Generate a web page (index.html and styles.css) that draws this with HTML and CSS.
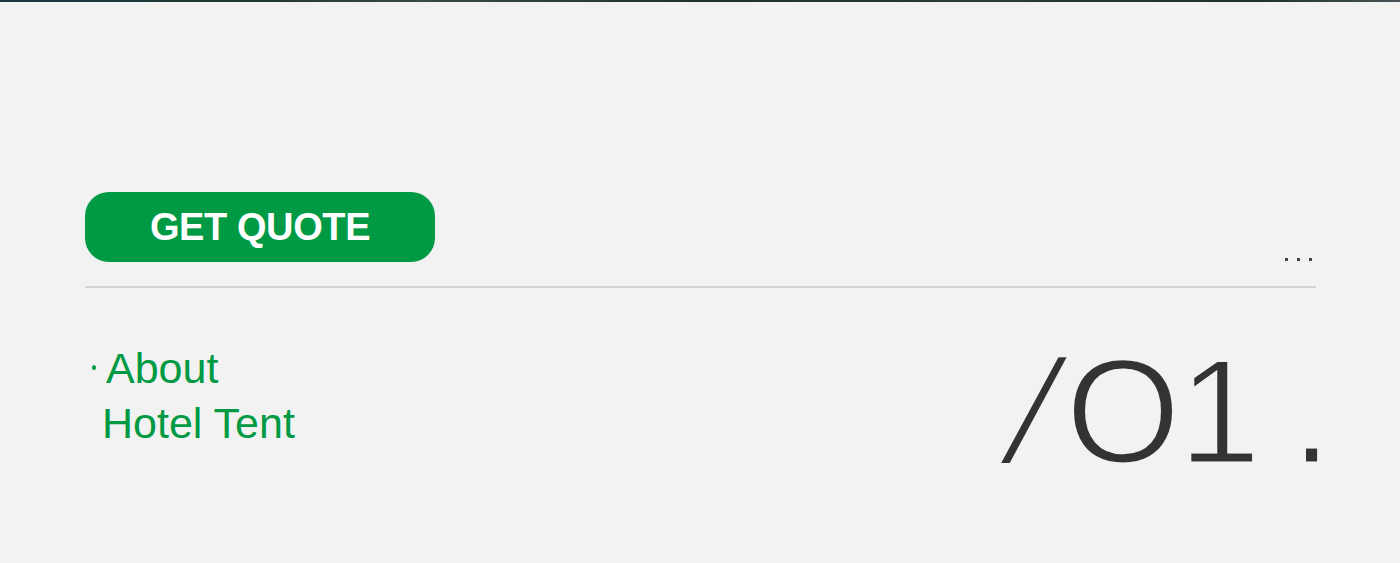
FILE: index.html
```html
<!DOCTYPE html>
<html lang="en">
<head>
  <meta charset="UTF-8">
  <title>About Hotel Tent</title>
  <link rel="stylesheet" href="styles.css">
</head>
<body>

  <div class="strip"></div>

  <div class="section">
    <div class="top-row">
      <a class="quote-btn" href="#">GET QUOTE</a>
      <div class="dots">
        <span></span><span></span><span></span>
      </div>
    </div>

    <div class="rule"></div>

    <div class="content-row">
      <div class="title">
        <span class="bullet"></span>
        <h2><span class="first">About</span><br>Hotel Tent</h2>
      </div>
      <div class="number"><span class="slash">/</span><span class="o">O</span>1<span class="dot">.</span></div>
    </div>
  </div>

</body>
</html>
```

FILE: styles.css
```css
body {
  margin: 0;
  padding: 0;
  background-color: #f2f2f2;
  font-family: "Liberation Sans", Arial, sans-serif;
}
.strip {
  height: 2px;
  background: linear-gradient(90deg, #1b3a44 0%, #223a30 20%, #3a4a40 30%, #1f3328 50%, #2c3a34 70%, #1d3328 90%, #4a5258 100%);
}
.section {
  margin: 0 84px 0 85px;
  padding-top: 190px;
}
.top-row {
  display: flex;
  justify-content: space-between;
  align-items: flex-end;
}
.quote-btn {
  display: flex;
  justify-content: center;
  align-items: center;
  width: 350px;
  height: 70px;
  border-radius: 24px;
  background-color: #009a44;
  color: #fff;
  font-size: 38px;
  font-weight: bold;
  letter-spacing: -0.4px;
  text-decoration: none;
}
.dots {
  display: flex;
  gap: 9px;
  margin-right: 4px;
  margin-bottom: 1px;
}
.dots span {
  width: 3px;
  height: 3px;
  background-color: #444;
}
.rule {
  height: 2px;
  margin-top: 24px;
  background-color: #d4d4d4;
}
.content-row {
  display: flex;
  justify-content: space-between;
  align-items: flex-start;
  margin-top: 53px;
}
.title {
  display: flex;
}
.bullet {
  width: 4px;
  height: 5px;
  border-radius: 50%;
  background-color: #009a44;
  margin: 24px 6px 0 7px;
}
.title h2 {
  margin: 0;
  color: #009a44;
  font-size: 43px;
  font-weight: normal;
  line-height: 55px;
}
.title .first {
  margin-left: 4px;
}
.number {
  margin-top: -3px;
  margin-right: -16px;
  color: #333;
  font-size: 148px;
  line-height: 1;
  -webkit-text-stroke: 3px #f2f2f2;
}
.number .slash {
  display: inline-block;
  transform: skewX(-15deg);
  margin-right: 11px;
}
.number .o {
  margin-right: -2px;
}
.number .dot {
  margin-left: 30px;
}
```
